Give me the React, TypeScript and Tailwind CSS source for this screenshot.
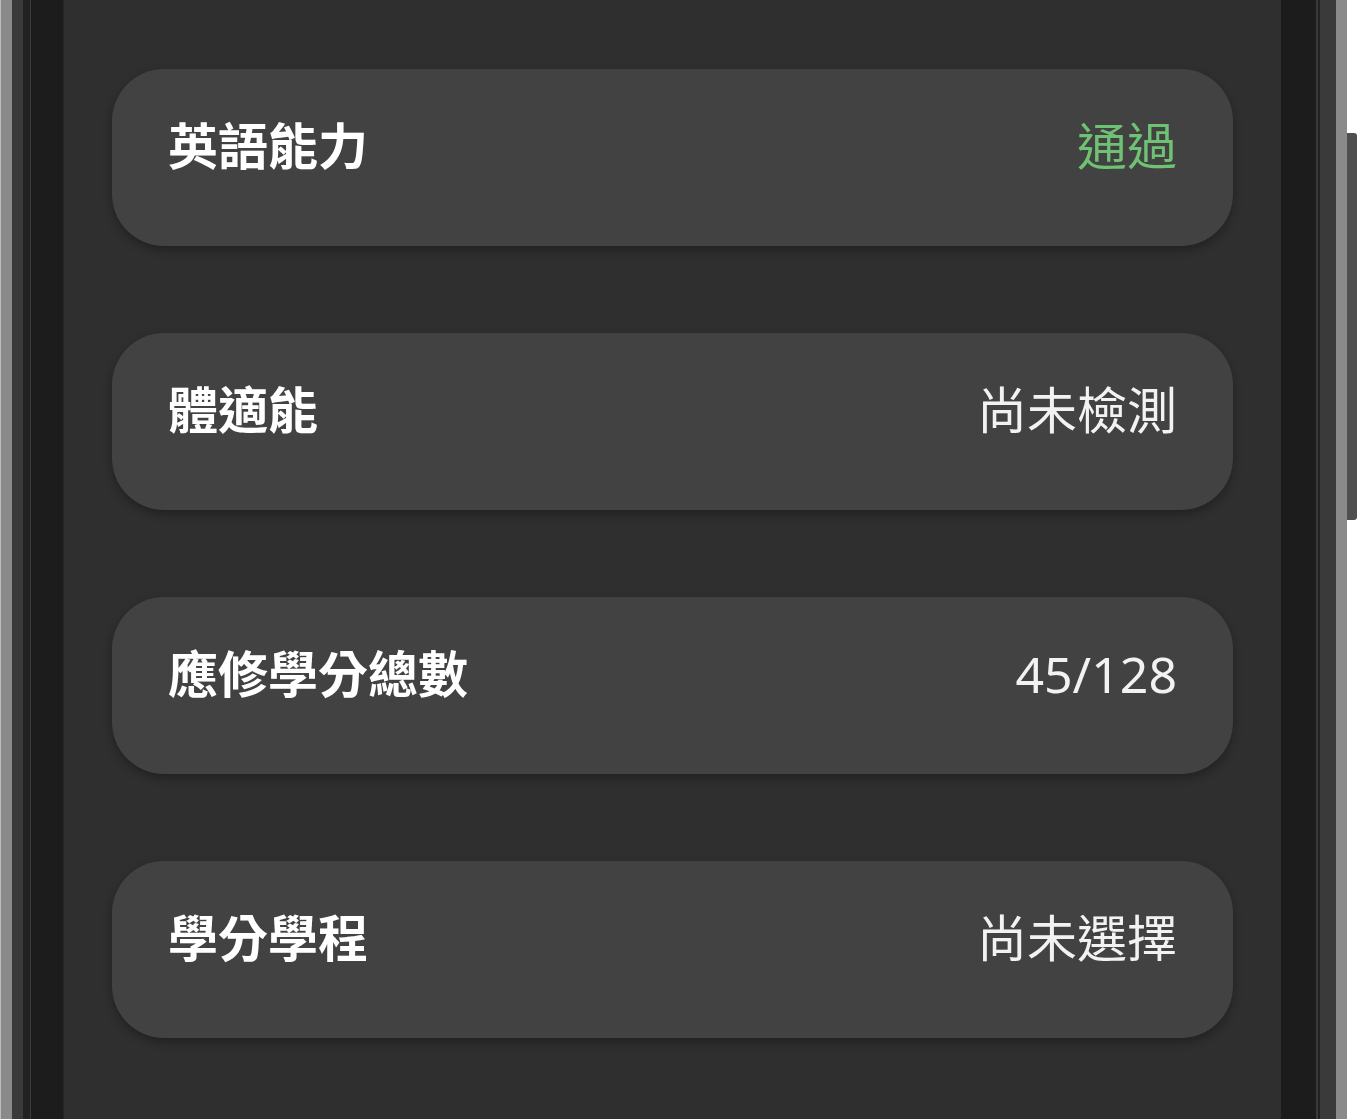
const rows = [
  { label: "英語能力", value: "通過", green: true },
  { label: "體適能", value: "尚未檢測" },
  { label: "應修學分總數", value: "45/128" },
  { label: "學分學程", value: "尚未選擇" },
];

function Row({ label, value, green }: { label: string; value: string; green?: boolean }) {
  return (
    <div className="flex h-[177px] items-start justify-between rounded-[52px] bg-[#424242] px-14 pt-[40px] shadow-[0_4px_10px_rgba(0,0,0,0.3)]">
      <span className="text-[50px] font-bold leading-[75px] text-white">{label}</span>
      <span
        className={
          green
            ? "text-[50px] font-normal leading-[75px] text-[#6fc274]"
            : "text-[50px] font-normal leading-[75px] text-[#f2f2f2]"
        }
      >
        {value}
      </span>
    </div>
  );
}

export default function App() {
  return (
    <div
      className="flex h-[1119px] w-[1359px] overflow-hidden bg-white"
      style={{ fontFamily: '"Noto Sans", "Noto Sans CJK TC", sans-serif' }}
    >
      {/* left bezel */}
      <div className="w-px bg-[#bdbdbd]" />
      <div className="w-[11px] bg-[#8a8a8a]" />
      <div className="w-[11px] bg-[#3a3a3a]" />
      <div className="w-[7px] bg-[#222222]" />
      <div className="w-px bg-[#3c3c3c]" />
      <div className="w-[32px] bg-[#1c1c1c]" />
      <div className="w-px bg-[#262626]" />

      {/* screen */}
      <div className="flex flex-1 flex-col gap-[87px] bg-[#2f2f2f] px-12 pt-[69px]">
        {rows.map((r) => (
          <Row key={r.label} {...r} />
        ))}
      </div>

      {/* right bezel */}
      <div className="w-[35px] bg-[#1c1c1c]" />
      <div className="w-[2px] bg-[#3a3a3a]" />
      <div className="w-[2px] bg-[#222222]" />
      <div className="w-[16px] bg-[#3a3a3a]" />
      <div className="w-[11px] bg-[#8a8a8a]" />
      <div className="flex w-[12px] flex-col bg-white pt-[133px]">
        <div className="h-[387px] w-[10px] rounded-r-[3px] bg-[#4f4f4f]" />
      </div>
    </div>
  );
}
